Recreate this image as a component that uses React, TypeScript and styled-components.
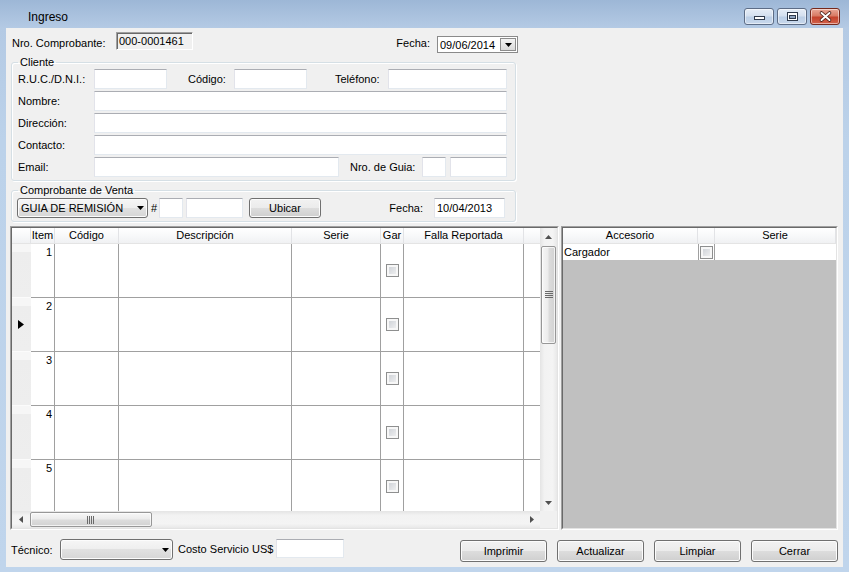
import React from 'react';
import styled, { createGlobalStyle } from 'styled-components';

const GlobalStyle = createGlobalStyle`
  * { box-sizing: border-box; }
  html, body { margin: 0; padding: 0; background: #ffffff; }
  body {
    font-family: "Liberation Sans", Arial, sans-serif;
    font-size: 11px;
    color: #000;
  }
`;

const Window = styled.div`
  width: 849px;
  height: 572px;
  display: flex;
  flex-direction: column;
  background: linear-gradient(#9db7d6 0px, #b4cae4 28px, #bcd2ea 140px, #c0d5ec 100%);
  overflow: hidden;
`;

const TitleBar = styled.div`
  height: 28px;
  flex: none;
  display: flex;
  align-items: flex-start;
  padding: 0 9px 0 28px;
`;

const Title = styled.span`
  flex: 1;
  margin-top: 10px;
  font-size: 12px;
  line-height: 14px;
`;

const CaptionButtons = styled.div`
  display: flex;
  gap: 3px;
  margin-top: 8px;
`;

const CaptionButton = styled.div<{ $close?: boolean }>`
  width: 30px;
  height: 17px;
  border: 1px solid ${p => (p.$close ? '#76291c' : '#5d6d86')};
  border-radius: 3px;
  background: ${p =>
    p.$close
      ? 'linear-gradient(#e9a897 0%, #d87b64 45%, #c4432c 55%, #d2614a 100%)'
      : 'linear-gradient(#e6edf6 0%, #d4e0ef 45%, #bccfe6 55%, #c8d8ec 100%)'};
  box-shadow: inset 0 0 0 1px rgba(255, 255, 255, 0.5);
  display: flex;
`;

const Client = styled.div`
  flex: 1;
  margin: 0 6px 5px 6px;
  background: #f0f0f0;
  display: flex;
  flex-direction: column;
`;

const TopRow = styled.div`
  margin-top: 4px;
  height: 22px;
  width: 512px;
  padding-left: 6px;
  display: flex;
  align-items: flex-start;
`;

const Label = styled.span<{ $w?: number; $pl?: number; $pr?: number; $right?: boolean; $lh?: number }>`
  flex: none;
  width: ${p => (p.$w ? `${p.$w}px` : 'auto')};
  padding-left: ${p => p.$pl ?? 0}px;
  padding-right: ${p => p.$pr ?? 0}px;
  text-align: ${p => (p.$right ? 'right' : 'left')};
  line-height: ${p => p.$lh ?? 20}px;
  white-space: nowrap;
`;

const Sunken = styled.div`
  width: 77px;
  height: 18px;
  border: 1px solid;
  border-color: #a0a0a0 #ffffff #ffffff #a0a0a0;
  box-shadow: inset 1px 1px 0 #696969;
  padding: 1px 0 0 2px;
  line-height: 15px;
`;

const Spacer = styled.div`
  flex: 1;
`;

const DateBox = styled.div`
  margin-top: 4px;
  width: 81px;
  height: 17px;
  border: 1px solid #8a8a8a;
  background: #fff;
  display: flex;
  align-items: center;
`;

const DateText = styled.span`
  flex: 1;
  padding-left: 2px;
`;

const DropBtn = styled.span`
  width: 16px;
  height: 13px;
  margin-right: 1px;
  border: 1px solid #8c8c8c;
  background: linear-gradient(#f3f3f3, #d9d9d9);
  display: flex;
  align-items: center;
  justify-content: center;
`;

const Group = styled.fieldset<{ $top: number; $pl: number }>`
  margin: ${p => p.$top}px 0 0 5px;
  width: 505px;
  flex: none;
  border: 1px solid #d5dfe5;
  border-radius: 3px;
  padding: 0 7px 3px ${p => p.$pl}px;
  box-shadow: inset 1px 1px 0 #fff, 1px 1px 0 #fff;
`;

const Legend = styled.legend<{ $ml: number }>`
  margin-left: ${p => p.$ml}px;
  padding: 0 2px;
  line-height: 13px;
  font-size: 11px;
`;

const Stack = styled.div<{ $pt?: number }>`
  display: flex;
  flex-direction: column;
  gap: 2px;
  padding-top: ${p => p.$pt ?? 0}px;
`;

const Row = styled.div`
  display: flex;
  align-items: center;
  height: 20px;
`;

const Field = styled.input<{ $w: number; $h?: number; $ml?: number }>`
  flex: none;
  width: ${p => p.$w}px;
  height: ${p => p.$h ?? 20}px;
  margin: 0 0 0 ${p => p.$ml ?? 0}px;
  padding: 0 2px;
  font: inherit;
  color: #000;
  background: #fff;
  border: 1px solid #e3e9ef;
  border-top-color: #abadb3;
  border-left-color: #e2e3ea;
  border-radius: 0;
  outline: none;
`;

const Combo = styled.div<{ $w: number; $h: number }>`
  flex: none;
  width: ${p => p.$w}px;
  height: ${p => p.$h}px;
  display: flex;
  align-items: center;
  padding: 0 3px 0 3px;
  border: 1px solid #707070;
  border-radius: 3px;
  background: linear-gradient(#f6f6f6 0%, #eeeeee 50%, #e1e1e1 50%, #d6d6d6 100%);
  box-shadow: inset 0 0 0 1px #fcfcfc;
`;

const ComboText = styled.span`
  flex: 1;
  white-space: nowrap;
`;

const Button = styled.button<{ $w: number; $h: number; $ml?: number; $mt?: number }>`
  flex: none;
  width: ${p => p.$w}px;
  height: ${p => p.$h}px;
  margin: ${p => p.$mt ?? 0}px 0 0 ${p => p.$ml ?? 0}px;
  padding: 0;
  font: inherit;
  color: #000;
  border: 1px solid #707070;
  border-radius: 3px;
  background: linear-gradient(#f2f2f2 0%, #ebebeb 50%, #dddddd 50%, #cfcfcf 100%);
  box-shadow: inset 0 0 0 1px #fcfcfc;
`;

const GridsRow = styled.div`
  margin-top: 4px;
  height: 304px;
  padding-left: 4px;
  display: flex;
  gap: 2px;
`;

const GridFrame = styled.div<{ $w: number }>`
  flex: none;
  width: ${p => p.$w}px;
  height: 100%;
  border: 1px solid;
  border-color: #a0a0a0 #ffffff #ffffff #a0a0a0;
`;

const GridInner = styled.div<{ $bg: string }>`
  height: 100%;
  border: 1px solid;
  border-color: #696969 #e3e3e3 #e3e3e3 #696969;
  background: ${p => p.$bg};
  overflow: hidden;
`;

const ScrollLayout = styled.div`
  height: 100%;
  display: grid;
  grid-template-columns: 1fr 17px;
  grid-template-rows: 1fr 17px;
`;

const Viewport = styled.div`
  overflow: hidden;
  min-height: 0;
  min-width: 0;
`;

const Table = styled.div`
  display: grid;
  grid-template-columns: 19px 24px 64px 173px 89px 23px 120px 40px;
  grid-template-rows: 16px;
  grid-auto-rows: 54px;
`;

const HeadCell = styled.div`
  background: linear-gradient(#ffffff 0%, #f8f9fa 50%, #f0f1f3 100%);
  border-right: 1px solid #e2e3e6;
  border-bottom: 1px solid #e4e4e4;
  line-height: 15px;
  text-align: center;
  white-space: nowrap;
  overflow: hidden;
`;

const RowHead = styled.div`
  background: linear-gradient(#f6f6f6 0, #f6f6f6 8px, #ededed 8px, #eeeeee 100%);
  border-bottom: 1px solid #fbfbfb;
  display: flex;
  align-items: center;
  padding-left: 6px;
`;

const Cell = styled.div<{ $kind?: 'num' | 'check' }>`
  background: #fff;
  border-right: 1px solid #a0a0a0;
  border-bottom: 1px solid #a0a0a0;
  ${p =>
    p.$kind === 'num'
      ? 'text-align: right; padding: 2px 2px 0 0; line-height: 13px;'
      : ''}
  ${p =>
    p.$kind === 'check'
      ? 'display: flex; align-items: center; justify-content: center;'
      : ''}
`;

const Check = styled.span`
  display: block;
  width: 13px;
  height: 13px;
  border: 1px solid #8e8f8f;
  background: linear-gradient(135deg, #c9cdd3 0%, #f5f5f5 100%);
  box-shadow: inset 0 0 0 2px #f7f7f7;
`;

const VScroll = styled.div`
  display: flex;
  flex-direction: column;
  background: linear-gradient(to right, #e4e4e4 0%, #f2f2f2 25%, #f4f4f4 75%, #e8e8e8 100%);
`;

const HScroll = styled.div`
  display: flex;
  background: linear-gradient(#e4e4e4 0%, #f2f2f2 25%, #f4f4f4 75%, #e8e8e8 100%);
`;

const Arrow = styled.div`
  flex: none;
  width: 17px;
  height: 17px;
  display: flex;
  align-items: center;
  justify-content: center;
`;

const Thumb = styled.div<{ $vertical?: boolean; $size: number }>`
  flex: none;
  ${p =>
    p.$vertical
      ? `height: ${p.$size}px; margin: 1px 1px 0 1px;
         background: linear-gradient(to right, #f7f7f7 0%, #ececec 45%, #dcdcdc 55%, #d2d2d2 100%);`
      : `width: ${p.$size}px; margin: 1px 0 1px 1px;
         background: linear-gradient(#f7f7f7 0%, #ececec 45%, #dcdcdc 55%, #d2d2d2 100%);`}
  border: 1px solid #979797;
  border-radius: 2px;
  box-shadow: inset 0 0 0 1px rgba(255, 255, 255, 0.7);
  display: flex;
  align-items: center;
  justify-content: center;
`;

const Corner = styled.div`
  background: #f0f0f0;
`;

const RightTable = styled.div`
  display: grid;
  grid-template-columns: 135px 17px 1fr;
  grid-template-rows: 16px 16px;
`;

const RightCell = styled.div<{ $check?: boolean }>`
  background: #fff;
  line-height: 16px;
  padding-left: 1px;
  ${p =>
    p.$check
      ? 'display: flex; align-items: center; justify-content: center; padding: 0; border-left: 1px solid #a0a0a0; border-right: 1px solid #a0a0a0;'
      : ''}
`;

const BottomRow = styled.div`
  margin-top: 9px;
  height: 23px;
  padding: 0 5px;
  display: flex;
  align-items: flex-start;
`;

const Buttons = styled.div`
  margin-left: auto;
  display: flex;
  gap: 10px;
`;

const DownGlyph = () => (
  <svg width="7" height="4" viewBox="0 0 7 4">
    <path d="M0 0 H7 L3.5 4 Z" fill="#000" />
  </svg>
);

const ScrollGlyph = ({ dir }: { dir: 'up' | 'down' | 'left' | 'right' }) => {
  const d = {
    up: 'M0 4 L3.5 0 L7 4 Z',
    down: 'M0 0 L7 0 L3.5 4 Z',
    left: 'M4 0 L4 7 L0 3.5 Z',
    right: 'M0 0 L4 3.5 L0 7 Z',
  }[dir];
  const vertical = dir === 'up' || dir === 'down';
  return (
    <svg width={vertical ? 7 : 4} height={vertical ? 4 : 7} viewBox={vertical ? '0 0 7 4' : '0 0 4 7'}>
      <path d={d} fill="#505050" />
    </svg>
  );
};

const Grip = ({ vertical }: { vertical?: boolean }) =>
  vertical ? (
    <svg width="8" height="8" viewBox="0 0 8 8">
      {[0, 2, 4, 6].map(y => (
        <rect key={y} x="0" y={y} width="8" height="1" fill="#6a6a6a" />
      ))}
    </svg>
  ) : (
    <svg width="8" height="8" viewBox="0 0 8 8">
      {[0, 2, 4, 6].map(x => (
        <rect key={x} x={x} y="0" width="1" height="8" fill="#6a6a6a" />
      ))}
    </svg>
  );

const RowMarker = () => (
  <svg width="6" height="9" viewBox="0 0 6 9">
    <path d="M0 0 L6 4.5 L0 9 Z" fill="#000" />
  </svg>
);

const columns = ['Item', 'Código', 'Descripción', 'Serie', 'Gar', 'Falla Reportada', ''];
const rows = [1, 2, 3, 4, 5];
const currentRow = 2;

const App = () => {
  return (
    <Window>
      <GlobalStyle />
      <TitleBar>
        <Title>Ingreso</Title>
        <CaptionButtons>
          <CaptionButton>
            <svg width="28" height="15" viewBox="0 0 28 15">
              <rect x="9.5" y="7.5" width="10" height="3" fill="#fff" stroke="#2f3a4b" />
            </svg>
          </CaptionButton>
          <CaptionButton>
            <svg width="28" height="15" viewBox="0 0 28 15">
              <rect x="9.5" y="3.5" width="10" height="8" fill="#fff" stroke="#2f3a4b" />
              <rect x="11.5" y="6.5" width="6" height="3" fill="#8fa4c0" stroke="#2f3a4b" />
            </svg>
          </CaptionButton>
          <CaptionButton $close>
            <svg width="28" height="15" viewBox="0 0 28 15">
              <path d="M10.5 4 L18.5 11 M18.5 4 L10.5 11" stroke="#4a1e16" strokeWidth="3.6" strokeLinecap="round" />
              <path d="M10.5 4 L18.5 11 M18.5 4 L10.5 11" stroke="#ffffff" strokeWidth="1.9" strokeLinecap="round" />
            </svg>
          </CaptionButton>
        </CaptionButtons>
      </TitleBar>

      <Client>
        <TopRow>
          <Label $w={104} $lh={22}>Nro. Comprobante:</Label>
          <Sunken>000-0001461</Sunken>
          <Spacer />
          <Label $lh={22} $pr={7}>Fecha:</Label>
          <DateBox>
            <DateText>09/06/2014</DateText>
            <DropBtn>
              <DownGlyph />
            </DropBtn>
          </DateBox>
        </TopRow>

        <Group $top={2} $pl={6}>
          <Legend $ml={0}>Cliente</Legend>
          <Stack>
            <Row>
              <Label $w={76}>R.U.C./D.N.I.:</Label>
              <Field $w={73} readOnly />
              <Label $w={67} $pl={21}>Código:</Label>
              <Field $w={73} readOnly />
              <Label $w={81} $pl={28}>Teléfono:</Label>
              <Field $w={119} readOnly />
            </Row>
            <Row>
              <Label $w={76}>Nombre:</Label>
              <Field $w={413} readOnly />
            </Row>
            <Row>
              <Label $w={76}>Dirección:</Label>
              <Field $w={413} readOnly />
            </Row>
            <Row>
              <Label $w={76}>Contacto:</Label>
              <Field $w={413} readOnly />
            </Row>
            <Row>
              <Label $w={76}>Email:</Label>
              <Field $w={245} readOnly />
              <Label $w={83} $pl={11}>Nro. de Guia:</Label>
              <Field $w={24} readOnly />
              <Field $w={57} $ml={4} readOnly />
            </Row>
          </Stack>
        </Group>

        <Group $top={3} $pl={5}>
          <Legend $ml={1}>Comprobante de Venta</Legend>
          <Stack $pt={1}>
            <Row>
              <Combo $w={131} $h={20}>
                <ComboText>GUIA DE REMISIÓN</ComboText>
                <DownGlyph />
              </Combo>
              <Label $w={11} $pl={3}>#</Label>
              <Field $w={24} readOnly />
              <Field $w={57} $ml={3} readOnly />
              <Button $w={72} $h={20} $ml={6}>Ubicar</Button>
              <Label $w={113} $pr={11} $right>Fecha:</Label>
              <Field $w={71} readOnly defaultValue="10/04/2013" />
            </Row>
          </Stack>
        </Group>

        <GridsRow>
          <GridFrame $w={549}>
            <GridInner $bg="#f0f0f0">
              <ScrollLayout>
                <Viewport>
                  <Table>
                    <HeadCell />
                    {columns.map((c, i) => (
                      <HeadCell key={i}>{c}</HeadCell>
                    ))}
                    {rows.map(r => (
                      <React.Fragment key={r}>
                        <RowHead>{r === currentRow && <RowMarker />}</RowHead>
                        <Cell $kind="num">{r}</Cell>
                        <Cell />
                        <Cell />
                        <Cell />
                        <Cell $kind="check">
                          <Check />
                        </Cell>
                        <Cell />
                        <Cell />
                      </React.Fragment>
                    ))}
                  </Table>
                </Viewport>
                <VScroll>
                  <Arrow>
                    <ScrollGlyph dir="up" />
                  </Arrow>
                  <Thumb $vertical $size={98}>
                    <Grip vertical />
                  </Thumb>
                  <Spacer />
                  <Arrow>
                    <ScrollGlyph dir="down" />
                  </Arrow>
                </VScroll>
                <HScroll>
                  <Arrow>
                    <ScrollGlyph dir="left" />
                  </Arrow>
                  <Thumb $size={122}>
                    <Grip />
                  </Thumb>
                  <Spacer />
                  <Arrow>
                    <ScrollGlyph dir="right" />
                  </Arrow>
                </HScroll>
                <Corner />
              </ScrollLayout>
            </GridInner>
          </GridFrame>

          <GridFrame $w={277}>
            <GridInner $bg="#c0c0c0">
              <RightTable>
                <HeadCell>Accesorio</HeadCell>
                <HeadCell />
                <HeadCell>Serie</HeadCell>
                <RightCell>Cargador</RightCell>
                <RightCell $check>
                  <Check />
                </RightCell>
                <RightCell />
              </RightTable>
            </GridInner>
          </GridFrame>
        </GridsRow>

        <BottomRow>
          <Label $w={49} $lh={23}>Técnico:</Label>
          <Combo $w={113} $h={21}>
            <ComboText />
            <DownGlyph />
          </Combo>
          <Label $w={103} $pl={5} $lh={21}>Costo Servicio US$</Label>
          <Field $w={68} $h={19} readOnly />
          <Buttons>
            <Button $w={87} $h={22} $mt={1}>Imprimir</Button>
            <Button $w={87} $h={22} $mt={1}>Actualizar</Button>
            <Button $w={87} $h={22} $mt={1}>Limpiar</Button>
            <Button $w={87} $h={22} $mt={1}>Cerrar</Button>
          </Buttons>
        </BottomRow>
      </Client>
    </Window>
  );
};

export default App;
